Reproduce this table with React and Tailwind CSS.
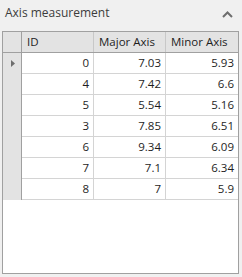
const ROWS = [
  { id: 0, major: '7.03', minor: '5.93' },
  { id: 4, major: '7.42', minor: '6.6' },
  { id: 5, major: '5.54', minor: '5.16' },
  { id: 3, major: '7.85', minor: '6.51' },
  { id: 6, major: '9.34', minor: '6.09' },
  { id: 7, major: '7.1', minor: '6.34' },
  { id: 8, major: '7', minor: '5.9' },
];

export default function App() {
  return (
    <div className="w-[242px] h-[277px] bg-[#f0f0f0] text-[#1e1e1e] font-['Open_Sans',sans-serif] overflow-hidden">
      {/* Panel title */}
      <div className="h-[31px] flex items-start justify-between pl-[5px] pr-[9px] pt-[4px]">
        <span className="text-[12px] text-[#3c3c3c]">Axis measurement</span>
        <svg width="11" height="7" viewBox="0 0 11 7" className="mt-[7px]">
          <path d="M1 6 L5.5 1.5 L10 6" fill="none" stroke="#6e6e6e" strokeWidth="2" />
        </svg>
      </div>

      {/* Grid */}
      <div className="ml-[2px] w-[237px] h-[243px] border border-[#a0a0a0] bg-white text-[11.5px]">
        <div className="grid grid-cols-[19px_72px_72px_1fr] h-[21px] bg-[#e3e3e3] border-b border-[#a0a0a0]">
          <div className="border-r border-[#a0a0a0]" />
          <div className="border-r border-[#c8c8c8] pl-[5px] leading-[20px]">ID</div>
          <div className="border-r border-[#c8c8c8] pl-[5px] leading-[20px]">Major Axis</div>
          <div className="pl-[5px] leading-[20px]">Minor Axis</div>
        </div>
        {ROWS.map((r, i) => (
          <div key={r.id} className="grid grid-cols-[19px_72px_72px_1fr] h-[21px]">
            <div className="bg-[#e3e3e3] border-r border-[#a0a0a0] flex items-center justify-center pl-[1px]">
              {i === 0 && (
                <svg width="4" height="7" viewBox="0 0 4 7">
                  <path d="M0 0 L4 3.5 L0 7 Z" fill="#6e6e6e" />
                </svg>
              )}
            </div>
            <div className="border-r border-b border-[#d4d4d4] text-right pr-[4px] leading-[20px]">{r.id}</div>
            <div className="border-r border-b border-[#d4d4d4] text-right pr-[4px] leading-[20px]">{r.major}</div>
            <div className="border-b border-[#d4d4d4] text-right pr-[4px] leading-[20px]">{r.minor}</div>
          </div>
        ))}
      </div>
    </div>
  );
}
